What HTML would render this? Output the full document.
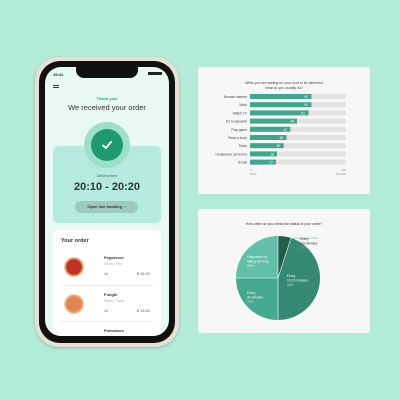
<!DOCTYPE html><html><head><style>
*{margin:0;padding:0;box-sizing:border-box}
body{width:400px;height:400px;background:#b3ebd9;position:relative;overflow:hidden;font-family:"Liberation Sans",sans-serif}
.a{position:absolute}
</style></head><body>
<!-- phone -->
<div class="a" style="left:35px;top:57px;width:144px;height:290px;border-radius:24px;background:#e6e0d6;box-shadow:0 1px 3px rgba(0,0,0,.2)"></div>
<div class="a" style="left:39px;top:61px;width:136px;height:282px;border-radius:21px;background:#111"></div>
<div class="a" style="left:45px;top:67px;width:124px;height:269px;border-radius:16px;background:#e8f8f2;overflow:hidden">
  <div class="a" style="left:31px;top:0;width:62px;height:11px;background:#111;border-radius:0 0 8px 8px"></div>
  <div class="a" style="left:8px;top:5px;font-size:4px;font-weight:bold;color:#222">19:41</div>
  <div class="a" style="left:103px;top:5px;width:14px;height:3px;background:#222"></div>
  <div class="a" style="left:8px;top:18px;width:6px;height:1px;background:#333;box-shadow:0 2px 0 #333"></div>
  <div class="a" style="left:0;width:124px;top:29px;text-align:center;font-size:4px;font-weight:bold;color:#2a9d70">Thank you!</div>
  <div class="a" style="left:0;width:124px;top:36px;text-align:center;font-size:7.5px;color:#333">We received your order</div>
  <div class="a" style="left:8px;top:79px;width:108px;height:77px;border-radius:5px;background:#b5ebdf"></div>
  <div class="a" style="left:39px;top:55px;width:46px;height:46px;border-radius:50%;background:#9ddfcb"></div>
  <div class="a" style="left:46px;top:62px;width:32px;height:32px;border-radius:50%;background:#1f9a6e"></div>
  <svg class="a" style="left:56px;top:72px" width="12" height="12" viewBox="0 0 12 12"><path d="M2 6.5 L5 9 L10 3" stroke="#fff" stroke-width="1.8" fill="none" stroke-linecap="round"/></svg>
  <div class="a" style="left:0;width:124px;top:107px;text-align:center;font-size:3.5px;color:#555">Delivery time</div>
  <div class="a" style="left:0;width:124px;top:114px;text-align:center;font-size:11px;font-weight:bold;color:#333">20:10 - 20:20</div>
  <div class="a" style="left:30px;top:134px;width:63px;height:12px;border-radius:6px;background:#9ccabd;font-size:4px;color:#333;text-align:center;line-height:12px;font-weight:bold">Open live tracking &nbsp;›</div>
  <div class="a" style="left:8px;top:163px;width:108px;height:120px;border-radius:5px;background:#fff"></div>
  <div class="a" style="left:16px;top:171px;font-size:5.5px;font-weight:bold;color:#333">Your order</div>
  <div class="a" style="left:19px;top:190px;width:20px;height:20px;border-radius:50%;background:radial-gradient(#c0302a 50%,#e8a860 62%,#f4e2c5 72%,transparent 73%)"></div>
  <div class="a" style="left:59px;top:188px;font-size:4px;font-weight:bold;color:#333">Pepperoni</div>
  <div class="a" style="left:59px;top:195px;font-size:3.5px;color:#aaa">30cm | Thin</div>
  <div class="a" style="left:59px;top:205px;font-size:3.8px;color:#555">1x</div>
  <div class="a" style="left:92px;top:205px;font-size:3.8px;color:#555">€ 15.00</div>
  <div class="a" style="left:16px;top:218px;width:92px;height:1px;background:#eee"></div>
  <div class="a" style="left:19px;top:227px;width:20px;height:20px;border-radius:50%;background:radial-gradient(#e38458 50%,#eeb07a 62%,#f4e2c5 72%,transparent 73%)"></div>
  <div class="a" style="left:59px;top:225px;font-size:4px;font-weight:bold;color:#333">Funghi</div>
  <div class="a" style="left:59px;top:232px;font-size:3.5px;color:#aaa">30cm | Thick</div>
  <div class="a" style="left:59px;top:242px;font-size:3.8px;color:#555">1x</div>
  <div class="a" style="left:92px;top:242px;font-size:3.8px;color:#555">€ 13.00</div>
  <div class="a" style="left:16px;top:254px;width:92px;height:1px;background:#eee"></div>
  <div class="a" style="left:59px;top:261px;font-size:4px;font-weight:bold;color:#333">Pomodoro</div>
</div>
<!-- bar card -->
<div class="a" style="left:198px;top:67px;width:172px;height:127px;border-radius:3px;background:#f7f7f7"></div>
<div class="a" style="left:198px;top:81px;width:172px;text-align:center;font-size:3.5px;color:#444;line-height:4.5px">While you are waiting for your food to be delivered<br>what do you usually do?</div>
<svg class="a" style="left:198px;top:67px" width="172" height="127">
<g font-size="3.3" fill="#444" text-anchor="end" font-family="Liberation Sans">
<g id="r"></g>
</g>
</svg>
<div class="a" style="left:198px;top:67px;width:172px;height:127px">
<svg width="172" height="127" font-family="Liberation Sans">
<g font-size="3.3">
<rect x="52" y="27" width="96" height="5" fill="#e3e3e3"/><rect x="52" y="27" width="61.4" height="5" fill="#3fa58c"/><text x="49" y="31" text-anchor="end" fill="#444">Browse internet</text><text x="110" y="31" text-anchor="end" fill="#fff">64</text>
<rect x="52" y="35.2" width="96" height="5" fill="#e3e3e3"/><rect x="52" y="35.2" width="61.4" height="5" fill="#3fa58c"/><text x="49" y="39.2" text-anchor="end" fill="#444">Work</text><text x="110" y="39.2" text-anchor="end" fill="#fff">64</text>
<rect x="52" y="43.4" width="96" height="5" fill="#e3e3e3"/><rect x="52" y="43.4" width="58.6" height="5" fill="#3fa58c"/><text x="49" y="47.4" text-anchor="end" fill="#444">Watch TV</text><text x="107" y="47.4" text-anchor="end" fill="#fff">61</text>
<rect x="52" y="51.6" width="96" height="5" fill="#e3e3e3"/><rect x="52" y="51.6" width="47" height="5" fill="#3fa58c"/><text x="49" y="55.6" text-anchor="end" fill="#444">Do housework</text><text x="96" y="55.6" text-anchor="end" fill="#fff">49</text>
<rect x="52" y="59.8" width="96" height="5" fill="#e3e3e3"/><rect x="52" y="59.8" width="40.3" height="5" fill="#3fa58c"/><text x="49" y="63.8" text-anchor="end" fill="#444">Play game</text><text x="89" y="63.8" text-anchor="end" fill="#fff">42</text>
<rect x="52" y="68" width="96" height="5" fill="#e3e3e3"/><rect x="52" y="68" width="36.5" height="5" fill="#3fa58c"/><text x="49" y="72" text-anchor="end" fill="#444">Read a book</text><text x="85" y="72" text-anchor="end" fill="#fff">38</text>
<rect x="52" y="76.2" width="96" height="5" fill="#e3e3e3"/><rect x="52" y="76.2" width="33.6" height="5" fill="#3fa58c"/><text x="49" y="80.2" text-anchor="end" fill="#444">Study</text><text x="82" y="80.2" text-anchor="end" fill="#fff">35</text>
<rect x="52" y="84.4" width="96" height="5" fill="#e3e3e3"/><rect x="52" y="84.4" width="26.9" height="5" fill="#3fa58c"/><text x="49" y="88.4" text-anchor="end" fill="#444">Housework (at home)</text><text x="76" y="88.4" text-anchor="end" fill="#fff">28</text>
<rect x="52" y="92.6" width="96" height="5" fill="#e3e3e3"/><rect x="52" y="92.6" width="25.9" height="5" fill="#3fa58c"/><text x="49" y="96.6" text-anchor="end" fill="#444">Social</text><text x="75" y="96.6" text-anchor="end" fill="#fff">27</text>
<text x="52" y="104" fill="#888" font-size="2.8">0</text><text x="52" y="108" fill="#888" font-size="2.8">None</text>
<text x="148" y="104" fill="#888" font-size="2.8" text-anchor="end">100</text><text x="148" y="108" fill="#888" font-size="2.8" text-anchor="end">Percent</text>
</g></svg></div>
<!-- pie card -->
<div class="a" style="left:198px;top:209px;width:172px;height:124px;border-radius:3px;background:#f7f7f7"></div>
<svg class="a" style="left:198px;top:209px" width="172" height="124" font-family="Liberation Sans">
<text x="86" y="16" font-size="3.5" text-anchor="middle" fill="#333">How often do you check the status of your order?</text>
<g transform="translate(80,69)">
<path d="M0 0 L0 -42 A42 42 0 0 1 12.98 -39.94 Z" fill="#245c4a"/>
<path d="M0 0 L12.98 -39.94 A42 42 0 0 1 0 42 Z" fill="#358a73"/>
<path d="M0 0 L0 42 A42 42 0 0 1 -42 0 Z" fill="#45a990"/>
<path d="M0 0 L-42 0 A42 42 0 0 1 0 -42 Z" fill="#62c0aa"/>
<path d="M0 0 L0 -42 M0 0 L12.98 -39.94 M0 0 L0 42 M0 0 L-42 0" stroke="#fff" stroke-width="0.6"/>
<path d="M12 -37 L16 -40 L40 -40" stroke="#3a9" stroke-width="0.4" fill="none"/>
<g font-size="3.3" fill="#fff"><text x="9" y="-1">Every</text><text x="9" y="3.5">10-15 minutes</text><text x="9" y="8" fill="#cde">45%</text>
<text x="-31" y="16">Every</text><text x="-31" y="20.5">30 minutes</text><text x="-31" y="25" fill="#cde">25%</text>
<text x="-31" y="-20">Only when it's</text><text x="-31" y="-15.5">taking too long</text><text x="-31" y="-11" fill="#dfe">25%</text></g>
<g font-size="3.3" fill="#333"><text x="22" y="-38">Every</text><text x="22" y="-33.5">3-5 minutes</text><text x="22" y="-29" fill="#999">5%</text></g>
</g></svg>
</body></html>
